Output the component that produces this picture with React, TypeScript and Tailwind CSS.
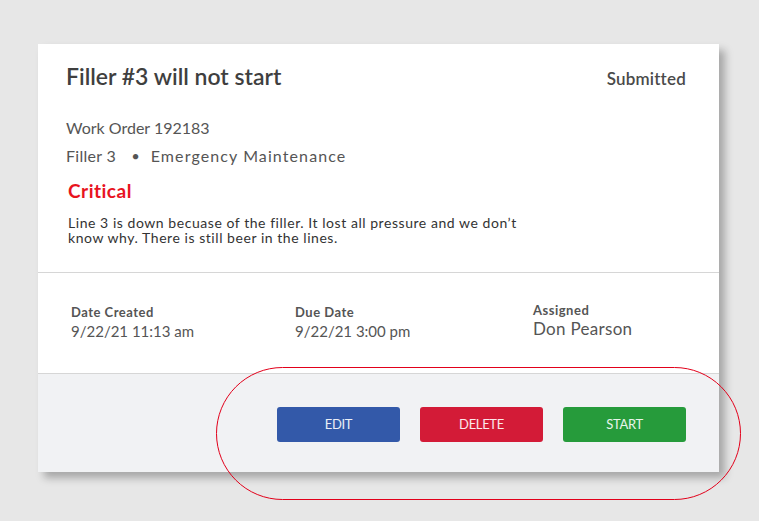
import React from 'react';

const dates = [
    { label: 'Date Created', value: '9/22/21 11:13 am', width: 'w-[224px]', shift: '' },
    { label: 'Due Date', value: '9/22/21 3:00 pm', width: 'w-[238px]', shift: '' },
    { label: 'Assigned', value: 'Don Pearson', width: '', shift: '-mt-[2px]' },
];

const actions = [
    { label: 'EDIT', color: 'bg-[#3359a9]' },
    { label: 'DELETE', color: 'bg-[#d31b37]' },
    { label: 'START', color: 'bg-[#269b3b]' },
];

const App = () => {
    return (
        <div className="relative w-[759px] h-[521px] bg-[#e7e7e7] pt-[44px] pl-[38px] font-['Lato',sans-serif] overflow-hidden">
            <div className="w-[681px] h-[428px] flex flex-col bg-white shadow-[6px_6px_8px_rgba(0,0,0,0.28)]">
                {/* header / description */}
                <div className="h-[229px] pl-[28px] pr-[33px] pt-[18px] border-b border-[#d6d6d6]">
                    <div className="flex justify-between items-start">
                        <h1 className="text-[23px] leading-[28px] font-semibold text-[#3f3f3f]">Filler #3 will not start</h1>
                        <span className="mt-[5px] text-[17px] leading-[24px] font-semibold text-[#4a4a4a] tracking-[0.2px]">Submitted</span>
                    </div>
                    <div className="mt-[23px] text-[16px] leading-[28px] text-[#555]">Work Order 192183</div>
                    <div className="flex items-center text-[16px] leading-[28px] text-[#555]">
                        <span className="tracking-[0.3px]">Filler 3</span>
                        <span className="ml-[16px] mr-[12px] text-[11px]">●</span>
                        <span className="tracking-[1.1px]">Emergency Maintenance</span>
                    </div>
                    <div className="mt-[8px] ml-[2px] text-[19px] leading-[26px] font-bold text-[#e8131f] tracking-[0.5px]">Critical</div>
                    <p className="mt-[11px] ml-[2px] w-[458px] text-[14px] leading-[15px] text-[#333] tracking-[0.55px]">
                        Line 3 is down becuase of the filler. It lost all pressure and we don’t know why. There is still beer in the lines.
                    </p>
                </div>

                {/* dates */}
                <div className="h-[101px] flex pl-[33px] pt-[31px] border-b border-[#d6d6d6]">
                    {dates.map((d, i) => (
                        <div key={i} className={`${d.width} ${d.shift}`}>
                            <div className="text-[13px] leading-[16px] font-bold text-[#555] tracking-[0.5px]">{d.label}</div>
                            <div className={`mt-[1px] leading-[20px] text-[#555] ${i === 2 ? 'text-[17px] tracking-[0.3px]' : 'text-[15px]'}`}>{d.value}</div>
                        </div>
                    ))}
                </div>

                {/* footer */}
                <div className="flex-1 bg-[#f1f2f4] flex justify-end items-start gap-[20px] pr-[33px] pt-[33px]">
                    {actions.map((a) => (
                        <button key={a.label} type="button" className={`${a.color} w-[123px] h-[35px] rounded-[3px] text-[13px] text-white/90 tracking-tight`}>
                            {a.label}
                        </button>
                    ))}
                </div>
            </div>

            {/* annotation ring */}
            <div className="absolute left-[216px] top-[367px] w-[525px] h-[133px] rounded-full border-[1.5px] border-[#e2001a] pointer-events-none" />
        </div>
    );
};

export default App;
